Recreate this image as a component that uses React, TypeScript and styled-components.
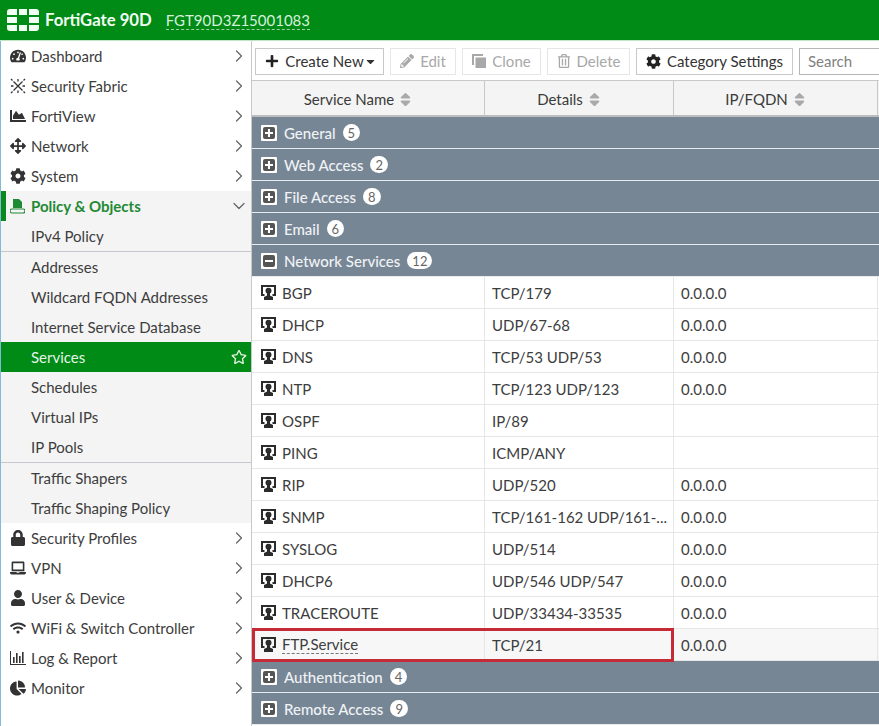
import React from "react";
import styled, { createGlobalStyle } from "styled-components";
import { FaTachometerAlt, FaChartArea, FaArrowsAlt, FaCog, FaLock, FaLaptop, FaUser, FaWifi, FaChartPie, FaPlus, FaPencilAlt, FaRegTrashAlt, FaSort, FaRegStar, FaCaretDown } from "react-icons/fa";
import { ChevronRight, ChevronDown } from "lucide-react";

const Global = createGlobalStyle`
  html, body { margin: 0; padding: 0; background: #fff; overflow: hidden; }
  body { font-family: Lato, "Liberation Sans", sans-serif; font-size: 15px; color: #333; }
  * { box-sizing: border-box; }
`;
const Page = styled.div`width: 879px; height: 726px; overflow: hidden; display: flex; flex-direction: column;`;
const Header = styled.header`height: 40px; flex: none; background: #008a16; color: #fff; display: flex; align-items: center; padding-left: 7px;`;
const Brand = styled.span`font-size: 16.700px; font-weight: 700; margin-left: 6px; margin-top: -1px; color: #f2fff2;`;
const Serial = styled.span`font-size: 15px; margin-left: 14px; color: #d8f0da; border-bottom: 1px dashed #9ad3a2; line-height: 18px; margin-top: 1px;`;
const Body = styled.div`flex: 1; display: flex; min-height: 0; border-top: 1px solid #bfe6c5;`;
const Side = styled.nav`width: 252px; flex: none; border-left: 1px solid #7fbcd6; border-right: 1px solid #c8c8c8; background: #fff;`;
const Item = styled.div<{ $open?: boolean }>`
  height: 30px; display: flex; align-items: center; position: relative; padding: 0 2px 0 7px;
  background: ${p => p.$open ? "#f4f4f4" : "transparent"};
  color: ${p => p.$open ? "#1f8a33" : "#3d3d3d"};
  font-weight: ${p => p.$open ? 700 : 400};
  &::before { content: ""; display: ${p => p.$open ? "block" : "none"}; position: absolute; left: 0; top: 0; width: 5px; height: 30px; background: #0a8a1e; }
`;
const ItemIcon = styled.span<{ $open?: boolean }>`width: 17px; height: 16px; margin-left: 1px; margin-right: 5px; display: flex; align-items: center; justify-content: center; color: ${p => p.$open ? "#1f8a33" : "#333"}; font-size: 16px; flex: none;`;
const ItemText = styled.span`flex: 1; white-space: nowrap; font-size: 15px;`;
const Chevron = styled.span`color: #666; display: flex; width: 20px; justify-content: center;`;
const SubGroup = styled.div<{ $last?: boolean }>`background: #f4f4f4; ${p => p.$last ? "" : "border-bottom: 1px solid #c5c9cf;"}`;
const Sub = styled.div<{ $active?: boolean }>`
  height: 30px; display: flex; align-items: center; justify-content: space-between; padding: 0 4px 0 30px;
  font-size: 15px; white-space: nowrap;
  background: ${p => p.$active ? "#008a16" : "transparent"}; color: ${p => p.$active ? "#e4f5e6" : "#3d3d3d"};
`;
const Main = styled.main`flex: 1; min-width: 0; display: flex; flex-direction: column;`;
const Toolbar = styled.div`height: 40px; flex: none; display: flex; align-items: center; padding: 1px 0 0 3px; border-bottom: 1px solid #c8c8c8;`;
const Btn = styled.div<{ $w: number; $off?: boolean; $inset?: number }>`
  width: ${p => p.$w}px; margin-right: 6px; flex: none; height: 27px; border: 1px solid ${p => p.$off ? "#e6e6e6" : "#c8c8c8"};
  display: flex; align-items: center; justify-content: center; gap: 6px; font-size: 15px; white-space: nowrap;
  padding-left: ${p => p.$inset ?? 0}px;
  color: ${p => p.$off ? "#a8a8a8" : "#333"}; background: #fff;
  svg { flex: none; }
`;
const SearchBox = styled.div`flex: 1; height: 27px; border: 1px solid #b5b5b5; border-right: none; font-size: 15px; color: #808080; display: flex; align-items: center; padding-left: 8px;`;
const grid = `display: grid; grid-template-columns: 233px 189px 204px; `;
const HeadRow = styled.div`${grid} height: 36px; flex: none; background: #f4f4f4; border-bottom: 2px solid #bdbdbd; width: 627px;`;
const HeadCell = styled.div`display: flex; align-items: center; justify-content: center; gap: 3px; border-right: 1px solid #c8c8c8; font-size: 15px; color: #3a3a3a; padding: 2px 18px 0 0; svg { color: #a9a9a9; font-size: 17px; }`;
const GroupRow = styled.div`height: 32px; flex: none; background: #778695; border-bottom: 1px solid #e8ecef; color: #f0f3f5; display: flex; align-items: center; padding-left: 9px; gap: 7px; font-size: 15px; font-weight: 500;`;
const Badge = styled.span`background: #fff; color: #666; border-radius: 9px; min-width: 17px; height: 17px; font-size: 13px; display: flex; align-items: center; justify-content: center; padding: 0 5px; font-weight: 400;`;
const DataRow = styled.div<{ $hl?: boolean }>`${grid} height: 32px; flex: none; width: 627px; border-bottom: 1px solid #e6e6e6; position: relative; background: ${p => p.$hl ? "#f7f7f7" : "#fff"};`;
const Cell = styled.div`display: flex; align-items: center; padding-left: 7px; border-right: 1px solid #e6e6e6; font-size: 15px; color: #3d3d3d; white-space: nowrap; overflow: hidden;`;
const NameCell = styled(Cell)`padding-left: 9px; gap: 6px;`;
const Dashed = styled.span`border-bottom: 1px dashed #777; line-height: 17px;`;
const Highlight = styled.div`position: absolute; left: 0; top: -1px; width: 422px; height: 34px; border: 3px solid #c42b36; pointer-events: none;`;

const Logo = () => (
  <svg width="32" height="24" viewBox="0 0 32 24" fill="#f4fff4">
    <path d="M0 7V4a3 3 0 0 1 3-3h7v6z" />
    <rect x="12" y="1" width="8" height="6" />
    <path d="M22 1h7a3 3 0 0 1 3 3v3H22z" />
    <rect x="0" y="9" width="10" height="6" />
    <rect x="22" y="9" width="10" height="6" />
    <path d="M0 17h10v6H3a3 3 0 0 1-3-3z" />
    <rect x="12" y="17" width="8" height="6" />
    <path d="M22 17h10v3a3 3 0 0 1-3 3h-7z" />
  </svg>
);
const Fabric = () => (
  <svg width="16" height="16" viewBox="0 0 16 16" fill="none" stroke="#333" strokeWidth="1.3">
    <path d="M3.500 3.500l9 9M12.500 3.500l-9 9" />
    <path d="M1 1l1.500 1.500M15 1l-1.500 1.500M1 15l1.500-1.500M15 15l-1.500-1.500M8 1v2.500M8 12.500V15M1 8h2.500M12.500 8H15" />
  </svg>
);
const PolicyIcon = () => (
  <svg width="15" height="15" viewBox="0 0 15 15">
    <path d="M3 0h6l3 3v6H3z" fill="currentColor" />
    <path d="M2 10h11a1.500 1.500 0 0 1 0 4H2a1.500 1.500 0 0 1 0-4z" fill="none" stroke="currentColor" strokeWidth="1.2" />
  </svg>
);
const LogIcon = () => (
  <svg width="16" height="14" viewBox="0 0 16 14" fill="#333">
    <rect x="0" y="0" width="1" height="13" /><rect x="0" y="13" width="16" height="1" />
    <rect x="3" y="6" width="1.600" height="6" /><rect x="6" y="2" width="1.600" height="10" />
    <rect x="9" y="5" width="1.600" height="7" /><rect x="12" y="1" width="1.600" height="11" />
  </svg>
);
const ServiceIcon = () => (
  <svg width="15" height="15" viewBox="0 0 15 15" style={{ flex: "none" }}>
    <path d="M0 0h15v11h-3.500V9H13V2H2v7h1.500v2H0z" fill="#2b2b2b" />
    <circle cx="7.500" cy="5.800" r="3" fill="#2b2b2b" />
    <path d="M6 8h3v2.500l3 1.500v3H3v-3l3-1.500z" fill="#2b2b2b" />
  </svg>
);
const CloneIcon = () => (
  <svg width="14" height="14" viewBox="0 0 14 14" fill="#a8a8a8">
    <path d="M0 0h11v2H2v9H0z" /><rect x="3.500" y="3.500" width="10.500" height="10.500" />
  </svg>
);
const ToggleIcon = ({ open }: { open?: boolean }) => (
  <svg width="16" height="16" viewBox="0 0 16 16" style={{ flex: "none" }}>
    <rect width="16" height="16" rx="1" fill="#fff" />
    <rect x="2" y="2" width="12" height="12" rx="2" fill="#555" />
    <rect x="4" y="7" width="8" height="2" fill="#fff" />
    {!open && <rect x="7" y="4" width="2" height="8" fill="#fff" />}
  </svg>
);

const top1: [string, React.ReactNode][] = [
  ["Dashboard", <FaTachometerAlt />], ["Security Fabric", <Fabric />], ["FortiView", <FaChartArea />],
  ["Network", <FaArrowsAlt />], ["System", <FaCog />],
];
const top2: [string, React.ReactNode][] = [
  ["Security Profiles", <FaLock />], ["VPN", <FaLaptop />], ["User & Device", <FaUser />],
  ["WiFi & Switch Controller", <FaWifi />], ["Log & Report", <LogIcon />], ["Monitor", <FaChartPie />],
];
const services = [
  ["BGP", "TCP/179", "0.0.0.0"], ["DHCP", "UDP/67-68", "0.0.0.0"], ["DNS", "TCP/53 UDP/53", "0.0.0.0"],
  ["NTP", "TCP/123 UDP/123", "0.0.0.0"], ["OSPF", "IP/89", ""], ["PING", "ICMP/ANY", ""],
  ["RIP", "UDP/520", "0.0.0.0"], ["SNMP", "TCP/161-162 UDP/161-...", "0.0.0.0"], ["SYSLOG", "UDP/514", "0.0.0.0"],
  ["DHCP6", "UDP/546 UDP/547", "0.0.0.0"], ["TRACEROUTE", "UDP/33434-33535", "0.0.0.0"],
];

const NavItem = ({ label, icon }: { label: string; icon: React.ReactNode }) => (
  <Item><ItemIcon>{icon}</ItemIcon><ItemText>{label}</ItemText><Chevron><ChevronRight size={20} strokeWidth={1.5} /></Chevron></Item>
);
const Group = ({ name, n, open }: { name: string; n: number; open?: boolean }) => (
  <GroupRow><ToggleIcon open={open} /><span>{name}</span><Badge>{n}</Badge></GroupRow>
);

export default function App() {
  return (
    <Page>
      <Global />
      <Header><Logo /><Brand>FortiGate 90D</Brand><Serial>FGT90D3Z15001083</Serial></Header>
      <Body>
        <Side>
          {top1.map(([l, i]) => <NavItem key={l} label={l} icon={i} />)}
          <Item $open><ItemIcon $open><PolicyIcon /></ItemIcon><ItemText>Policy &amp; Objects</ItemText><Chevron><ChevronDown size={20} strokeWidth={1.5} /></Chevron></Item>
          <SubGroup><Sub>IPv4 Policy</Sub></SubGroup>
          <SubGroup>
            <Sub>Addresses</Sub><Sub>Wildcard FQDN Addresses</Sub><Sub>Internet Service Database</Sub>
            <Sub $active>Services<FaRegStar size={16} /></Sub>
            <Sub>Schedules</Sub><Sub>Virtual IPs</Sub><Sub>IP Pools</Sub>
          </SubGroup>
          <SubGroup $last><Sub>Traffic Shapers</Sub><Sub>Traffic Shaping Policy</Sub></SubGroup>
          {top2.map(([l, i]) => <NavItem key={l} label={l} icon={i} />)}
        </Side>
        <Main>
          <Toolbar>
            <Btn $w={129} $inset={3}><FaPlus size={14} color="#222" />Create New<FaCaretDown size={13} style={{ marginLeft: -6 }} /></Btn>
            <Btn $w={66} $off><FaPencilAlt size={14} />Edit</Btn>
            <Btn $w={79} $off><CloneIcon />Clone</Btn>
            <Btn $w={83} $off><FaRegTrashAlt size={14} />Delete</Btn>
            <Btn $w={157}><FaCog size={15} color="#222" />Category Settings</Btn>
            <SearchBox>Search</SearchBox>
          </Toolbar>
          <HeadRow>
            <HeadCell>Service Name<FaSort /></HeadCell>
            <HeadCell>Details<FaSort /></HeadCell>
            <HeadCell>IP/FQDN<FaSort /></HeadCell>
          </HeadRow>
          <Group name="General" n={5} />
          <Group name="Web Access" n={2} />
          <Group name="File Access" n={8} />
          <Group name="Email" n={6} />
          <Group name="Network Services" n={12} open />
          {services.map(([a, b, c]) => (
            <DataRow key={a}>
              <NameCell><ServiceIcon />{a}</NameCell><Cell>{b}</Cell><Cell>{c}</Cell>
            </DataRow>
          ))}
          <DataRow $hl>
            <NameCell><ServiceIcon /><Dashed>FTP.Service</Dashed></NameCell><Cell>TCP/21</Cell><Cell>0.0.0.0</Cell>
            <Highlight />
          </DataRow>
          <Group name="Authentication" n={4} />
          <Group name="Remote Access" n={9} />
        </Main>
      </Body>
    </Page>
  );
}
